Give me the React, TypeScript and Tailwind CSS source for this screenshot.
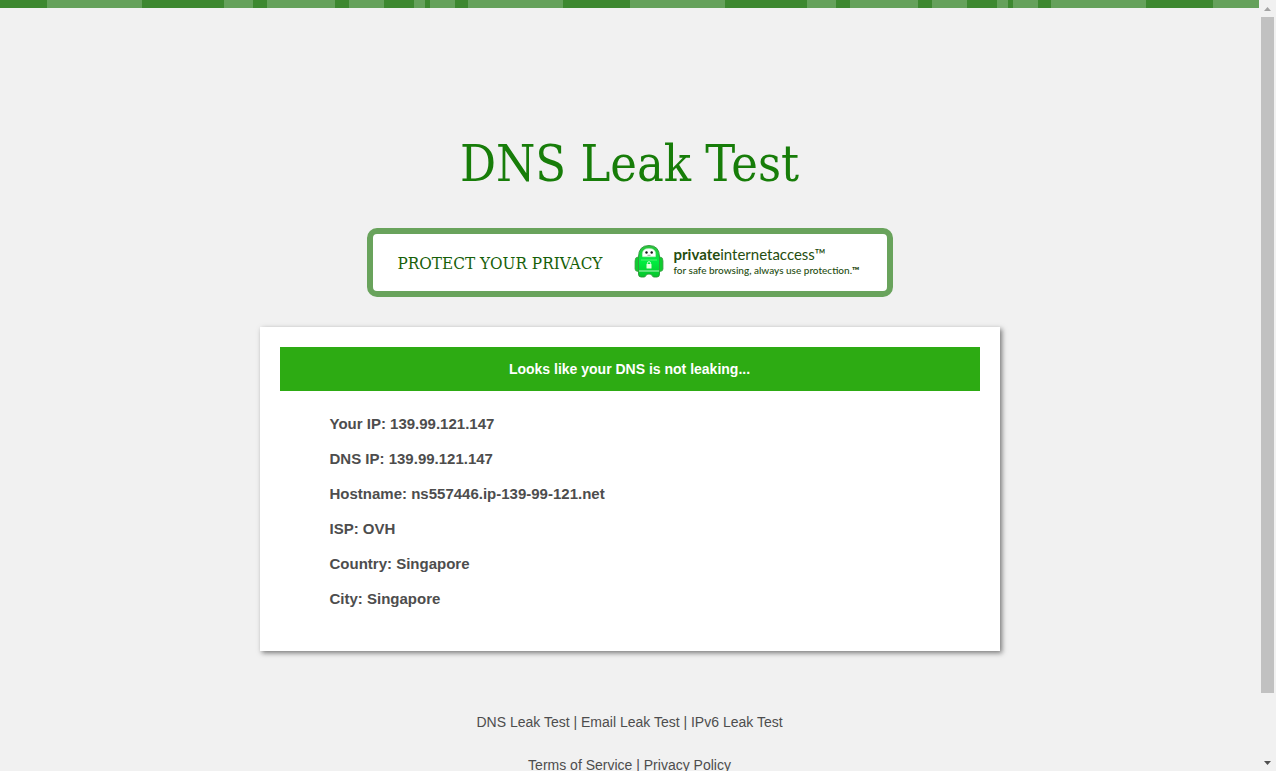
const stripes = [
  "w-[47px] bg-[#3d8830]",
  "w-[95px] bg-[#65a15b]",
  "w-[82px] bg-[#3d8830]",
  "w-[29px] bg-[#65a15b]",
  "w-[14px] bg-[#3d8830]",
  "w-[68px] bg-[#65a15b]",
  "w-[14px] bg-[#3d8830]",
  "w-[35px] bg-[#65a15b]",
  "w-[30px] bg-[#3d8830]",
  "w-[11px] bg-[#65a15b]",
  "w-[5px] bg-[#3d8830]",
  "w-[25px] bg-[#65a15b]",
  "w-[13px] bg-[#3d8830]",
  "w-[95px] bg-[#65a15b]",
  "w-[20px] bg-[#3d8830]",
];

const details = [
  ["Your IP", "139.99.121.147"],
  ["DNS IP", "139.99.121.147"],
  ["Hostname", "ns557446.ip-139-99-121.net"],
  ["ISP", "OVH"],
  ["Country", "Singapore"],
  ["City", "Singapore"],
];

function StripeBar() {
  return (
    <div className="flex h-2 overflow-hidden" aria-hidden="true">
      {[0, 1, 2, 3, 4].map((tile) => (
        <div key={tile} className="flex shrink-0">
          {stripes.map((stripe, i) => (
            <div key={i} className={stripe} />
          ))}
        </div>
      ))}
    </div>
  );
}

function Robot() {
  return (
    <svg viewBox="0 0 30 34" className="mb-[3px] h-[34px] w-[30px] shrink-0" aria-hidden="true">
      <defs>
        <linearGradient id="body" x1="0" y1="0" x2="0" y2="1">
          <stop offset="0" stopColor="#2fbf3c" />
          <stop offset="0.5" stopColor="#00ee40" />
          <stop offset="1" stopColor="#08c42c" />
        </linearGradient>
      </defs>
      <path d="M4 13 Q1 13 1 17 V25 Q1 27 4 27.500 M26 13 Q29 13 29 17 V25 Q29 27 26 27.500" fill="#10cc30" stroke="#4d9d50" strokeWidth="0.800" />
      <path
        d="M4.500 13 Q4.500 1.500 15 1.500 Q25.500 1.500 25.500 13 V30 Q25.500 33 23 33 H20 Q18.500 33 18 31.300 Q17.500 30 15 30 Q12.500 30 12 31.300 Q11.500 33 10 33 H7 Q4.500 33 4.500 30 Z"
        fill="url(#body)"
        stroke="#279534"
        strokeWidth="0.900"
      />
      <path d="M8.500 12.800 Q7 4.500 15 4.500 Q23 4.500 21.500 12.800 Z" fill="#fff" stroke="#b7e9bd" strokeWidth="0.500" />
      <circle cx="12.500" cy="8.500" r="1.200" fill="#161616" />
      <circle cx="17.700" cy="8.500" r="1.200" fill="#161616" />
      <path d="M13.500 11.300 H16.500" stroke="#777" strokeWidth="0.700" />
      <path d="M7 16 H23" stroke="#7af58c" strokeWidth="0.700" />
      <path d="M5 27 H25" stroke="#b8f7bf" strokeWidth="1" />
      <path d="M13.400 20.500 V19.200 Q13.400 17.700 15 17.700 Q16.600 17.700 16.600 19.200 V20.500" fill="none" stroke="#d6ffd8" strokeWidth="0.900" />
      <rect x="12.500" y="20" width="5" height="4.500" rx="0.500" fill="#e4ffe0" />
    </svg>
  );
}

function ScrollBar() {
  return (
    <div className="flex w-[17px] shrink-0 flex-col items-center bg-[#f1f1f1]" aria-hidden="true">
      <div className="flex h-[17px] items-center">
        <svg viewBox="0 0 7 4" className="h-1 w-[7px]">
          <path d="M3.500 0 L7 4 H0 Z" fill="#a3a3a3" />
        </svg>
      </div>
      <div className="flex w-full grow flex-col px-[2px]">
        <div className="grow-[676] bg-[#c1c1c1]" />
        <div className="grow-[61]" />
      </div>
      <div className="flex h-[17px] items-center">
        <svg viewBox="0 0 7 4" className="h-1 w-[7px]">
          <path d="M0 0 H7 L3.500 4 Z" fill="#505050" />
        </svg>
      </div>
    </div>
  );
}

export default function App() {
  return (
    <div className="flex h-screen overflow-hidden bg-[#f1f1f1] font-['Liberation_Sans',Arial,sans-serif] text-[#4d4d4d]">
      <div className="min-w-0 grow overflow-hidden">
        <StripeBar />
        <main className="flex flex-col items-center pt-[126px]">
          <h1 className="font-['DejaVu_Serif_Condensed','DejaVu_Serif',serif] text-[50px] leading-[60px] text-[#177d09]">
            DNS Leak Test
          </h1>
          <a
            href="#protect"
            className="mt-[34px] flex h-[69px] w-full max-w-[526px] items-center rounded-[10px] border-[6px] border-[#69a35c] bg-white pl-[25px]"
          >
            <span className="w-[236px] shrink-0 font-['DejaVu_Serif_Condensed','DejaVu_Serif',serif] text-[17px] leading-6 whitespace-nowrap text-[#176009]">
              PROTECT YOUR PRIVACY
            </span>
            <Robot />
            <span className="mb-[3px] ml-[10px] font-['Lato','Open_Sans',sans-serif] whitespace-nowrap text-[#264d10]">
              <span className="block text-[15px] leading-[18px]">
                <b>private</b>internetaccess™
              </span>
              <span className="block text-[10px] leading-[14px] font-medium">
                for safe browsing, always use protection.<b>™</b>
              </span>
            </span>
          </a>
          <section className="mt-[30px] w-full max-w-[740px] bg-white p-5 pb-[35px] shadow-[2px_2px_5px_rgba(0,0,0,0.5)]">
            <h2 className="bg-[#2dab13] text-center text-[14px] leading-[44px] font-bold text-white">
              Looks like your DNS is not leaking...
            </h2>
            <ul className="mt-[15px] px-[50px] text-[15px] leading-[35px] font-bold">
              {details.map(([label, value]) => (
                <li key={label}>
                  {label}: {value}
                </li>
              ))}
            </ul>
          </section>
          <footer className="mt-[60px] flex flex-col items-center gap-[21px] text-[14px] leading-[22px]">
            <nav>
              <a href="#dns">DNS Leak Test</a> | <a href="#email">Email Leak Test</a> |{" "}
              <a href="#ipv6">IPv6 Leak Test</a>
            </nav>
            <nav>
              <a href="#terms">Terms of Service</a> | <a href="#privacy">Privacy Policy</a>
            </nav>
          </footer>
        </main>
      </div>
      <ScrollBar />
    </div>
  );
}
